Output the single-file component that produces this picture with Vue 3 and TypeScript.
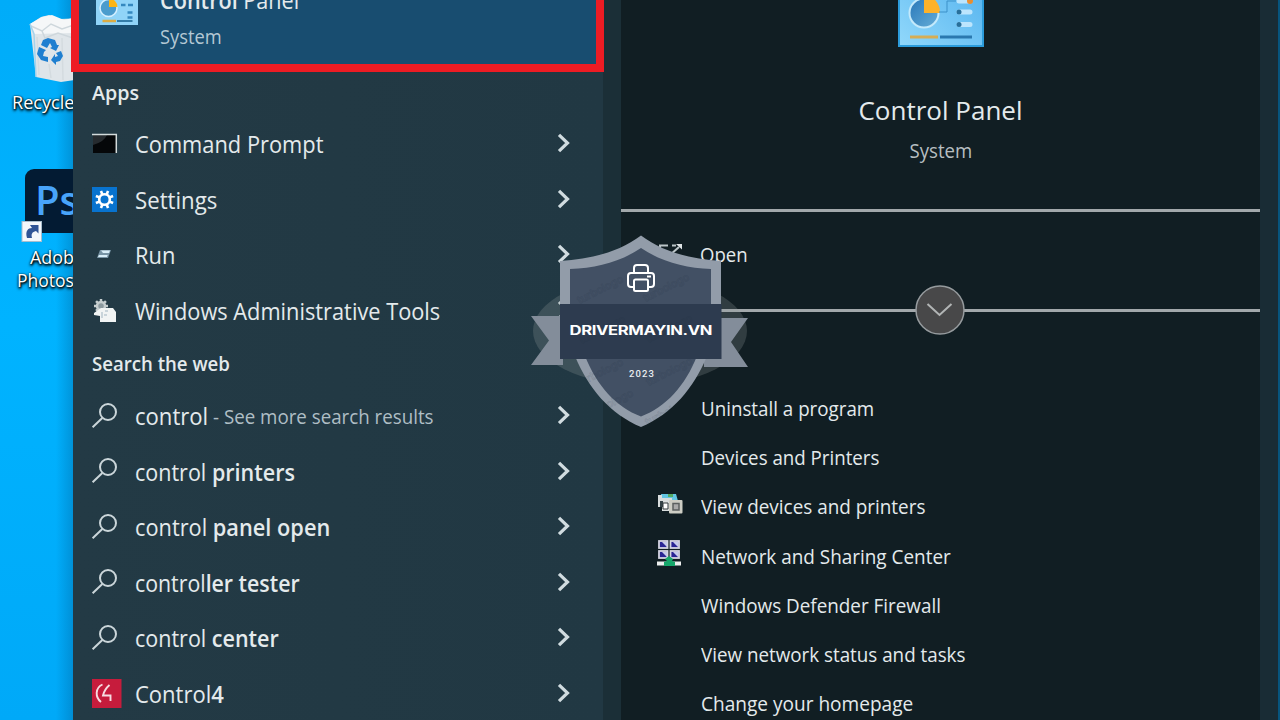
<script setup lang="ts">
interface Row {
  icon: string
  text: string
  bold?: string
  note?: string
  width: number
  noteWidth?: number
}

interface Action {
  text: string
  width: number
  icon?: 'devices' | 'network'
}

const apps: Row[] = [
  { icon: 'cmd', text: 'Command Prompt', width: 188 },
  { icon: 'settings', text: 'Settings', width: 82 },
  { icon: 'run', text: 'Run', width: 40 },
  { icon: 'tools', text: 'Windows Administrative Tools', width: 305 },
]

const web: Row[] = [
  { icon: 'search', text: 'control', width: 73, note: '- See more search results', noteWidth: 221 },
  { icon: 'search', text: 'control ', bold: 'printers', width: 160 },
  { icon: 'search', text: 'control ', bold: 'panel open', width: 195 },
  { icon: 'search', text: 'control', bold: 'ler tester', width: 165 },
  { icon: 'search', text: 'control ', bold: 'center', width: 144 },
  { icon: 'control4', text: 'Control', bold: '4', width: 89 },
]

const sections = [
  { title: 'Apps', width: 47, rows: apps },
  { title: 'Search the web', width: 138, rows: web },
]

const actions: Action[] = [
  { text: 'Uninstall a program', width: 173 },
  { text: 'Devices and Printers', width: 178 },
  { text: 'View devices and printers', width: 224, icon: 'devices' },
  { text: 'Network and Sharing Center', width: 250, icon: 'network' },
  { text: 'Windows Defender Firewall', width: 240 },
  { text: 'View network status and tasks', width: 264 },
  { text: 'Change your homepage', width: 212 },
]

const teeth = [0, 45, 90, 135, 180, 225, 270, 315]

const marks = [
  [576, 264], [642, 262], [578, 304], [645, 303], [576, 347], [645, 346], [586, 378], [644, 386], [590, 412],
]

// Condenses a label horizontally to its given width.
const vFit = {
  mounted(el: HTMLElement, binding: { value: number }) {
    const natural = el.offsetWidth
    if (natural) el.style.transform = `scaleX(${binding.value / natural})`
  },
}
</script>

<template>
  <main class="screen">
    <aside class="desktop">
      <svg class="bin" width="56" height="70" viewBox="0 0 56 70">
        <path d="M5 10 L16 3 L24 1 L35 5 L56 4 V65 L36 68 L11 63 Z" fill="#dfe5e9" />
        <path d="M5 10 L17 3 L27 1 L39 6 L52 3 V19 L9 20 Z" fill="#f5f7f8" />
        <path d="M6 12 L17 17 L26 10 L37 15 L52 10 M17 17 L20 24 L33 19 L48 24" fill="none" stroke="#ced7dc" stroke-width="1.5" />
        <path d="M5 10 L9 20 L11 63" fill="none" stroke="#a4d3ec" stroke-width="1.5" />
        <path d="M12 23 L14 61 M24 50 L26 64 M37 24 L38 66" stroke="#d4dbdf" stroke-width="1.5" />
        <g fill="#1f7fd0">
          <path d="M18 26 L23 24 L30 26 L32 31 L34 31 L31 37 L25 34 L27 33 L25 29 L22 34 L16 31 Z" />
          <path d="M14 33 L21 36 L19 38 L18 42 L23 43 L23 48 L16 46 L12 40 Z" />
          <path d="M31 39 L36 37 L38 42 L35 47 L31 48 L31 51 L26 46 L30 40 L30 43 L33 42 Z" />
        </g>
      </svg>
      <div class="desk-label recycle"><span v-fit="62">Recycle</span></div>
      <div class="ps">
        <svg width="60" height="74" viewBox="0 0 60 74">
          <rect x="4" y="0" width="66" height="64" rx="9" fill="#031b33" />
          <text x="14" y="46" class="ps-text">Ps</text>
          <rect x="1" y="52.500" width="19.500" height="20" fill="#f3f7fb" stroke="#a8bdcd" />
          <path d="M6 69 C4 62 7 59 11 59 L9 56 H17.500 V64.500 L15 62 C11 63 10 65 11 69 Z" fill="#2f5496" />
        </svg>
      </div>
      <div class="desk-label adobe"><span v-fit="44">Adob</span></div>
      <div class="desk-label photos"><span v-fit="57">Photos</span></div>
    </aside>

    <section class="results">
      <div class="best">
        <svg class="best-icon" width="42" height="42" viewBox="0 0 84 84">
          <rect width="84" height="84" fill="#90d4f8" />
          <circle cx="25" cy="50" r="17" fill="#4b9ccd" stroke="#d4efff" stroke-width="3" />
          <path d="M26 48 V31 A17 17 0 0 1 43 48 Z" fill="#fdb515" />
          <path d="M50 44 h9 M64 44 h10 M63 59 h10 M63 69 h10" stroke="#3488bf" stroke-width="5" />
          <path d="M13 76 H40" stroke="#dcac43" stroke-width="5" /><path d="M42 76 H73" stroke="#347da9" stroke-width="4" />
        </svg>
        <div class="best-copy">
          <div class="best-title"><span v-fit="139"><b>Control</b> Panel</span></div>
          <div class="best-sub"><span v-fit="62">System</span></div>
        </div>
      </div>

      <template v-for="section in sections" :key="section.title">
        <h2><span v-fit="section.width">{{ section.title }}</span></h2>
        <div v-for="(row, i) in section.rows" :key="i" class="row">
          <div class="icon">
            <svg v-if="row.icon === 'cmd'" width="26" height="22" viewBox="0 0 26 22">
              <rect x="1" y="1" width="23" height="19" fill="#050709" />
              <path d="M1 2 H15 Q12 9 1 12 Z" fill="#262b2f" />
              <path d="M0 1.500 H24.300 V20" fill="none" stroke="#d3dbdc" stroke-width="1.500" />
            </svg>
            <svg v-else-if="row.icon === 'settings'" width="25" height="25" viewBox="0 0 25 25">
              <rect width="25" height="25" fill="#0873cf" />
              <g stroke="#fff" stroke-width="2.600">
                <path v-for="a in teeth" :key="a" d="M12.500 3.200 V7" :transform="`rotate(${a + 22.5} 12.5 12.5)`" />
                <circle cx="12.500" cy="12.500" r="5.300" fill="none" />
              </g>
            </svg>
            <svg v-else-if="row.icon === 'run'" width="25" height="25" viewBox="0 0 25 25">
              <path d="M8 8 H19 L16 16 H5 Z" fill="#7894a5" />
              <path d="M9 8.500 H18 L17 11 H11 Z M6 15 H15 L15.700 13 H7 Z" fill="#d9eef8" />
            </svg>
            <svg v-else-if="row.icon === 'tools'" width="26" height="26" viewBox="0 0 26 26">
              <g stroke="#c6cecf" stroke-width="2.500">
                <path v-for="a in teeth" :key="a" d="M9 2 V5" :transform="`rotate(${a} 9 9)`" />
                <circle cx="9" cy="9" r="4" fill="#8b999e" />
              </g>
              <path d="M2 16 L9 11 H21 L24 15 V25 H8 V19 L2 18 Z" fill="#f1f4f4" />
              <path d="M10 15 v6 M13 14 h3 M12 18 h3" stroke="#a1b5c1" />
            </svg>
            <svg v-else-if="row.icon === 'search'" class="search" width="28" height="28" viewBox="0 0 28 28">
              <circle cx="16" cy="10" r="8" /><path d="M10.300 16 L.6 25.300" />
            </svg>
            <svg v-else width="30" height="29" viewBox="0 0 30 29">
              <rect width="29.500" height="29" fill="#c61c3c" />
              <path d="M10.500 5.500 C3 9 3 18 9 23 M17.500 6 C14 9 12 12 11 16.500 H18.500 V22" fill="none" stroke="#f6dce1" stroke-width="1.900" />
            </svg>
          </div>
          <span class="label" v-fit="row.width">{{ row.text }}<b v-if="row.bold">{{ row.bold }}</b></span>
          <div v-if="row.note" class="note"><span v-fit="row.noteWidth">{{ row.note }}</span></div>
          <svg class="chev" width="14" height="20" viewBox="0 0 14 20"><path d="M2 1.800 L10.500 10 L2 18.200" /></svg>
        </div>
      </template>
    </section>

    <section class="details">
      <header>
        <svg class="hero" width="86" height="86" viewBox="0 0 86 86">
          <defs>
            <linearGradient id="tile" x1="0" y1="1" x2="1" y2="0">
              <stop offset="0" stop-color="#91d8fb" /><stop offset="1" stop-color="#4caeed" />
            </linearGradient>
            <linearGradient id="pie" x1="0" y1="0" x2="1" y2="1">
              <stop offset="0" stop-color="#2877b9" /><stop offset="1" stop-color="#65add7" />
            </linearGradient>
          </defs>
          <rect x="1" y="1" width="84" height="84" fill="url(#tile)" stroke="#2c9cdb" stroke-width="2" />
          <circle cx="26" cy="52" r="14.500" fill="url(#pie)" stroke="#c3e9fb" stroke-width="2" />
          <path d="M26 52 V34 A17 17 0 0 1 42 52 Z" fill="#fdb229" />
          <path d="M41 51 H49 V40 H58" fill="none" stroke="#3d91c9" />
          <path d="M61 40 H72 M61 51 H72 M61 63.500 H72" stroke="#bce5fd" stroke-width="5" stroke-linecap="round" />
          <circle cx="61" cy="51" r="2.500" fill="#276f9b" /><circle cx="61" cy="63.500" r="2.500" fill="#276f9b" />
          <circle cx="72" cy="40" r="3" fill="#e78e32" />
          <path d="M12 76 H40" stroke="#d6ad55" stroke-width="3" /><path d="M42 76 H74" stroke="#2a78af" stroke-width="3" />
        </svg>
        <h1><span v-fit="164">Control Panel</span></h1>
        <p><span v-fit="63">System</span></p>
      </header>

      <div class="open">
        <svg width="26" height="26" viewBox="0 0 26 26"><path d="M10 6.500 H2 V23 H20 V17 M12 16 L21 8 M14 6.500 H18" /><path class="tip" d="M18 5 H24 V10.500 Z" /></svg>
        <span v-fit="48">Open</span>
      </div>
      <div class="divider">
        <svg width="50" height="50" viewBox="0 0 50 50">
          <circle cx="25" cy="25" r="24" fill="#484849" stroke="#969b9e" stroke-width="1.500" />
          <path d="M12.500 19 L24.500 30 L36.500 19" fill="none" stroke="#b2b5b5" stroke-width="2" />
        </svg>
      </div>

      <ul>
        <li v-for="a in actions" :key="a.text">
          <div class="action-icon">
            <svg v-if="a.icon === 'devices'" width="26" height="23" viewBox="0 0 26 23">
              <path d="M4 2 H19 L21 9 H5 Z" fill="#62c5e2" /><path d="M11 2 h5 v3 h-5z" fill="#56ab62" />
              <path d="M1 3 H5 V6 H15 V19 H5 V15 H1 Z" fill="#d9dddd" />
              <path d="M3 9 H6 V15 H3 Z" fill="#344247" /><path d="M6 11 h5 v6 H6z" fill="#fff" stroke="#323b3d" />
              <rect x="12" y="8" width="13.500" height="13.500" rx="1" fill="#cdcdc4" />
              <rect x="16" y="11.500" width="6" height="6.500" fill="#aaa" stroke="#5c6060" stroke-width="1.500" />
            </svg>
            <svg v-else-if="a.icon === 'network'" width="25" height="27" viewBox="0 0 25 27">
              <g fill="#2a2594" stroke="#d5d5e2" stroke-width="1.800">
                <rect x="2" y="1" width="8.500" height="7" /><rect x="13.500" y="1" width="8.500" height="7" />
                <rect x="2" y="11" width="8.500" height="7" /><rect x="13.500" y="11" width="8.500" height="7" />
              </g>
              <path d="M5 2 L10 7 V2 Z M16 2 L21 7 V2 Z M5 12 L10 17 V12 Z M16 12 L21 17 V12 Z" fill="#c6caeb" />
              <path d="M0 21.500 H24 V25.500 H0 Z" fill="#eceeed" />
              <path d="M12 16 L16 19 L15 21 L18 22 V26 H7 V22 L10 21 L8 19 Z" fill="#16a66a" />
            </svg>
          </div>
          <span v-fit="a.width">{{ a.text }}</span>
        </li>
      </ul>
    </section>
    <div class="edge"></div>

    <svg class="badge" width="240" height="220" viewBox="520 220 240 220">
      <defs>
        <clipPath id="badge-area">
          <path d="M641 235.500 C619 252 592 259 560 261 V304 L531 316 V365 H577 C589 393 613 415 641 427 C669 415 693 393 705 365 H748 V318 L722 304 V261 C690 259 663 252 641 235.500Z" />
        </clipPath>
      </defs>
      <ellipse cx="640" cy="331" rx="107" ry="54" fill="#929a9d" fill-opacity=".25" />
      <path d="M531 316 H563 V365 H531 L549 340.500 Z M718 318 H748 L731 342 L748 367 H704 V359 H718 Z" fill="#838d9a" />
      <path d="M641 235.500 C619 252 592 259 560 261 V304 L575 356 C588 388 610 414 641 427 C672 414 694 388 707 356 L721 304 V261 C690 259 663 252 641 235.500Z" fill="#929ca9" />
      <path d="M641 248 C620 262 597 268 570 269 V304 L585 356 C597 386 616 407 641 416.500 C666 407 685 386 697 356 L711 304 V269 C685 268 662 262 641 248Z" fill="#425064" />
      <rect x="560" y="304" width="161.500" height="55" fill="#2d3b4f" />
      <g class="marks" clip-path="url(#badge-area)">
        <text v-for="(m, i) in marks" :key="i" :x="m[0] + 4" :y="m[1] + 42" textLength="50" :transform="`rotate(-27 ${m[0]} ${m[1] + 42})`">turbologo</text>
      </g>
      <g fill="none" stroke="#fff" stroke-width="2" stroke-linejoin="round">
        <path d="M634 273 V268 Q634 265 637 265 H645 Q648 265 648 268 V273" />
        <path d="M633 287 H631 Q628 287 628 284 V276 Q628 273 631 273 H651 Q654 273 654 276 V284 Q654 287 651 287 H649" />
        <rect x="634" y="279.500" width="14" height="11.500" rx="1.500" fill="#425064" />
        <path d="M647 276.500 H651" />
      </g>
      <text x="569.500" y="334.600" class="brand" textLength="108.300" transform="translate(569.5 0) scale(1.32 1) translate(-569.5 0)">DRIVERMAYIN.VN</text>
      <text x="629" y="376.500" class="year" textLength="25">2023</text>
    </svg>
  </main>
</template>

<style>
html, body { margin: 0; overflow: hidden; background: #101e23; }
</style>

<style scoped>
.screen {
  position: relative;
  display: flex;
  width: 1280px;
  height: 720px;
  overflow: hidden;
  font-family: "Open Sans", "Noto Sans", sans-serif;
  color: #e4eaec;
}
.screen span { display: inline-block; white-space: pre; transform-origin: left center; flex: none; }
svg { display: block; flex: none; }
b { font-weight: 600; }

.desktop {
  box-sizing: border-box;
  width: 73px;
  flex: none;
  overflow: hidden;
  padding-top: 14px;
  background:
    linear-gradient(90deg, transparent 56px, rgba(0, 45, 90, .22) 73px),
    linear-gradient(180deg, #00acf9, #00b3ff 45%, #00a9f8);
}
.bin { margin-left: 25px; }
.desk-label {
  height: 23px;
  line-height: 23px;
  font-size: 17.5px;
  font-weight: 500;
  color: #fff;
  text-shadow: 1px 1px 2px #000, 0 2px 3px #000, 0 0 2px rgba(0, 0, 0, .7);
}
.recycle { margin: 7px 0 0 12px; }
.ps { margin: 53px 0 0 21px; padding-top: 2px; height: 74px; }
.ps-text { font: 600 40px "Open Sans", sans-serif; fill: #48a4fa; }
.adobe { margin: 3px 0 0 30px; }
.photos { margin-left: 17px; }

.results {
  box-sizing: border-box;
  width: 548px;
  flex: none;
  border-right: 18px solid #1b2f37;
  background: linear-gradient(90deg, #233a45, #213843);
}
.best {
  box-sizing: border-box;
  display: flex;
  width: 533px;
  height: 71.500px;
  margin-left: -2px;
  border: solid #ed1c24;
  border-width: 0 8px 8px;
  background: #184d70;
  position: relative;
}
.best-icon { margin: -17px 0 0 17px; }
.best-copy { margin: -14px 0 0 22px; }
.best-title { height: 28px; line-height: 28px; font-size: 23px; }
.best-sub { height: 28px; margin-top: 9px; line-height: 28px; font-size: 19.5px; color: #b4c8d4; }
h2 {
  height: 45.500px;
  margin: 0 0 0 19px;
  line-height: 40px;
  font-size: 20.500px;
  font-weight: 600;
}
.row + h2 { height: 50px; line-height: 48px; }
.row { position: relative; display: flex; align-items: center; height: 55.500px; padding-left: 19px; }
.icon { width: 43px; flex: none; }
.row .icon > svg { overflow: visible; margin-top: -2px; }
.search { fill: none; stroke: #cbd6da; stroke-width: 2; }
.label { margin-top: -1px; font-size: 23px; }
.note { position: absolute; left: 140px; font-size: 19.500px; color: #afbec5; }
.chev { position: absolute; right: 32px; top: 16px; fill: none; stroke: #d1dce0; stroke-width: 3.200; }

.details { width: 639px; flex: none; background: #111e23; }
header {
  display: flex;
  box-sizing: border-box;
  height: 211.500px;
  flex-direction: column;
  align-items: center;
  border-bottom: 3px solid #a2a8ab;
}
header span { transform-origin: center !important; }
.hero { margin-top: -39px; }
h1 { height: 40px; margin: 43px 0 0; line-height: 40px; font-size: 26px; font-weight: 400; }
header p { height: 30px; margin: 6px 0 0; line-height: 30px; font-size: 19.500px; color: #b7bec1; }
.open { display: flex; height: 86.500px; align-items: center; padding-left: 38px; font-size: 20.500px; }
.open span { margin-top: -2px; }
.open svg { margin: -6px 16px 0 -1px; fill: none; stroke: #bcc5c8; stroke-width: 2; }
.open .tip { fill: #dfe4e6; stroke: none; }
.divider { display: flex; height: 24px; align-items: center; justify-content: center; background: linear-gradient(#a2a8ab, #a2a8ab) center / 100% 3px no-repeat; }
.divider svg { margin-left: -1px; }
ul { margin: 61.500px 0 0; padding: 0; list-style: none; }
li { display: flex; height: 49.200px; align-items: center; padding-left: 36px; font-size: 20.500px; }
.action-icon { width: 44px; flex: none; }
.action-icon svg { margin-top: -5px; }
.edge { box-sizing: border-box; width: 20px; border-right: 2px solid #07547d; background: #192c35; }

.badge { position: absolute; left: 520px; top: 220px; }
.marks { font: 600 11px Inter, sans-serif; fill: none; stroke: #202c3b; stroke-opacity: .13; stroke-width: .8; }
.brand { font: 700 12.600px Inter, sans-serif; fill: #fff; }
.year { font: 500 9.500px "Roboto", sans-serif; fill: #e9edf0; }
</style>
